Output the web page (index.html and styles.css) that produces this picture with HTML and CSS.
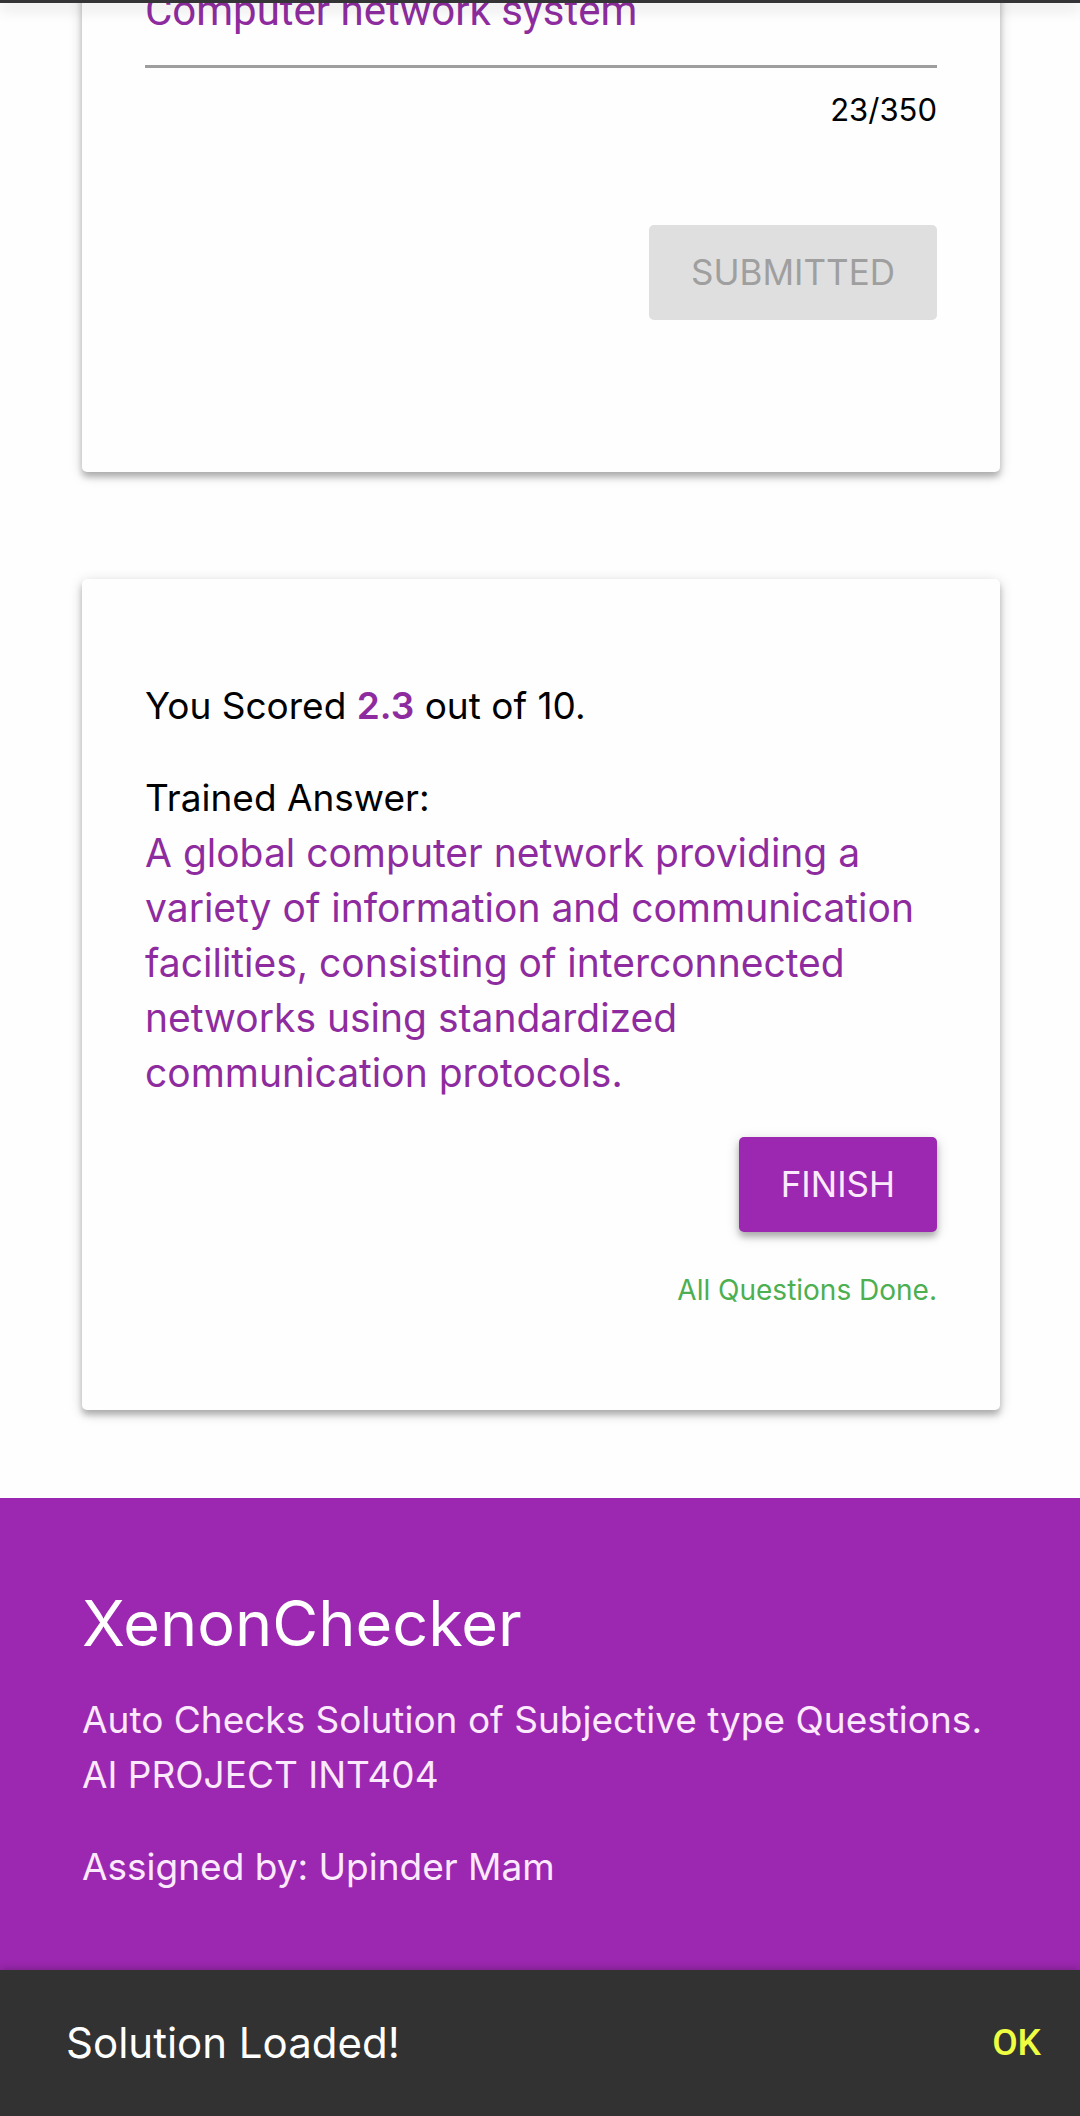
FILE: index.html
```html
<!DOCTYPE html>
<html lang="en">
<head>
<meta charset="utf-8">
<meta name="viewport" content="width=device-width, initial-scale=1">
<title>XenonChecker</title>
<link rel="stylesheet" href="styles.css">
</head>
<body>
<header class="topbar"></header>
<main class="content">
  <form class="card card-question">
    <input class="answer" type="text" value="Computer network system" maxlength="350" aria-label="Your answer">
    <span class="counter">23/350</span>
    <button class="btn btn-submit" type="submit" disabled>SUBMITTED</button>
  </form>
  <section class="card card-result">
    <p class="text">You Scored <b class="score">2.3</b> out of 10.</p>
    <div class="solution">
      <p class="text">Trained Answer:</p>
      <p class="trained">A global computer network providing a variety of information and communication facilities, consisting of interconnected networks using standardized communication protocols.</p>
    </div>
    <button class="btn btn-finish" type="button">FINISH</button>
    <span class="done">All Questions Done.</span>
  </section>
</main>
<footer class="footer">
  <h1 class="brand">XenonChecker</h1>
  <p class="text">Auto Checks Solution of Subjective type Questions.<br>AI PROJECT INT404</p>
  <p class="text">Assigned by: Upinder Mam</p>
</footer>
<div class="toast" role="status">
  <span>Solution Loaded!</span>
  <button class="toast-action" type="button">OK</button>
</div>
</body>
</html>
```
FILE: styles.css
```css
* {
  box-sizing: border-box;
}

body {
  margin: 0;
  display: flex;
  flex-direction: column;
  min-height: 100vh;
  background: #fefefe;
  color: #000;
  font-family: Inter, "Open Sans", sans-serif;
  font-size: 37px;
  line-height: 55px;
}

p, h1 {
  margin: 0;
}

.topbar {
  position: fixed;
  top: 0;
  left: 0;
  right: 0;
  z-index: 2;
  height: 3px;
  background: #343436;
  box-shadow: 0 5px 14px rgba(0, 0, 0, 0.25);
}

.content {
  display: flex;
  flex-direction: column;
  gap: 107px;
  padding: 0 80px 88px 82px;
}

.card {
  display: flex;
  flex-direction: column;
  padding: 0 63px;
  border-radius: 5px;
  background: #fefefe;
  box-shadow: 0 5px 6px rgba(0, 0, 0, 0.24), 0 3px 14px rgba(0, 0, 0, 0.16);
}

.card-question {
  margin-top: -64px;
  padding-top: 48px;
  padding-bottom: 152px;
}

.card-result {
  gap: 37px;
  padding-top: 99px;
  padding-bottom: 99px;
}

.answer {
  width: 100%;
  height: 84px;
  padding: 0 0 29px;
  border: 0;
  border-bottom: 3px solid #9e9e9e;
  border-radius: 0;
  background: none;
  color: #8e2c9f;
  font: 42px/52px Roboto, sans-serif;
}

.counter {
  align-self: flex-end;
  margin: 18px 0 91px;
  font-size: 31px;
  line-height: 48px;
}

.btn {
  align-self: flex-end;
  height: 95px;
  padding: 0 42px;
  border: 0;
  border-radius: 5px;
  font: inherit;
  font-size: 35px;
}

.btn-submit {
  background: #dfdfdf;
  color: #9f9f9f;
}

.btn-finish {
  background: #9c27b0;
  color: #fbeafd;
  box-shadow: 0 5px 6px rgba(0, 0, 0, 0.24), 0 3px 14px rgba(0, 0, 0, 0.16);
}

.score,
.trained {
  color: #8e2c9f;
}

.score {
  font-weight: 600;
}

.trained {
  font-size: 39px;
}

.done {
  align-self: flex-end;
  color: #4caf50;
  font-size: 28px;
  line-height: 42px;
}

.footer {
  flex: 1;
  display: flex;
  flex-direction: column;
  gap: 37px;
  padding: 81px 80px 75px 82px;
  background: #9c27b0;
  color: #fbe9fd;
}

.brand {
  margin-bottom: -12px;
  color: #fff;
  font-size: 63px;
  font-weight: 400;
  line-height: 88px;
}

.toast {
  position: sticky;
  bottom: 0;
  display: flex;
  align-items: center;
  justify-content: space-between;
  padding: 43px 39px 43px 66px;
  background: #323232;
  box-shadow: 0 -1px 8px rgba(0, 0, 0, 0.25);
  color: #fff;
  font-size: 42px;
  line-height: 60px;
}

.toast-action {
  padding: 0;
  border: 0;
  background: none;
  color: #eeff41;
  font: 500 37px/44px Roboto, sans-serif;
}
```
